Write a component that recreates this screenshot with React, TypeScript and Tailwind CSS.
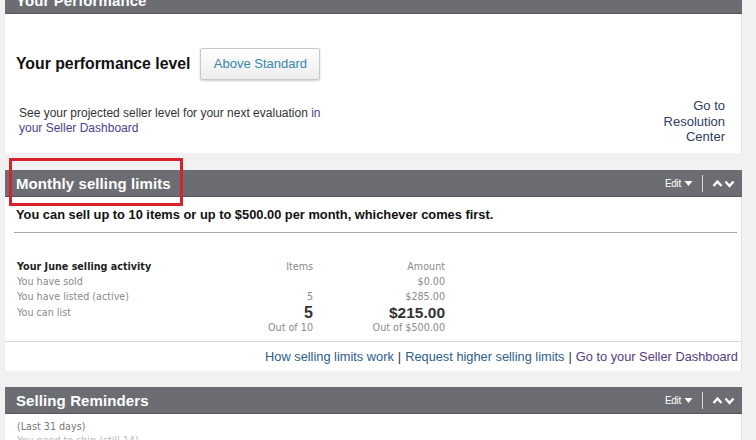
const EditControls = () => (
    <div className="flex items-center text-white">
        <span className="text-[10px] font-['Liberation_Sans',Arial,sans-serif] tracking-[-0.3px]">Edit</span>
        <svg className="ml-[3px]" width="9" height="7" viewBox="0 0 9 7">
            <path d="M0.5 1 L8.5 1 L4.5 6 Z" fill="#ffffff" />
        </svg>
        <span className="mx-[9px] h-[17px] w-px bg-[#d8d8d8]" />
        <svg width="24" height="9" viewBox="0 0 24 9">
            <path d="M1.5 7 L5.5 2.5 L9.5 7" stroke="#ffffff" strokeWidth="2.4" fill="none" />
            <path d="M13.5 2.5 L17.5 7 L21.5 2.5" stroke="#ffffff" strokeWidth="2.4" fill="none" />
        </svg>
    </div>
);

const Header = ({ title, controls, className = "" }: { title: string; controls?: boolean; className?: string }) => (
    <div className={`h-[27px] bg-[#6c6d72] flex items-center justify-between pl-[11px] pr-[6px] border-b border-[#55565a] ${className}`}>
        <h2 className="text-white font-bold text-[15px] leading-none tracking-[0.1px]">{title}</h2>
        {controls && <EditControls />}
    </div>
);

const rows = [
    { label: "You have sold", items: "", amount: "$0.00" },
    { label: "You have listed (active)", items: "5", amount: "$285.00" },
];

export default function App() {
    return (
        <div className="relative w-[756px] h-[440px] overflow-hidden bg-[#f1f1f1] font-['Liberation_Sans',Arial,sans-serif] text-[#222]">
            <div className="ml-[5px] w-[737px]">
                <Header title="Your Performance" className="-mt-[13px]" />

                <div className="h-[139px] bg-white border-r border-[#e2e2e2] px-[11px] pt-[34px]">
                    <div className="flex items-center">
                        <span className="text-[15.8px] font-bold text-[#111]">Your performance level</span>
                        <button className="ml-[10px] h-[32px] w-[120px] rounded-[2px] border border-[#c9c9c9] bg-gradient-to-b from-white to-[#ededed] shadow-[0_1px_2px_rgba(0,0,0,0.2)] text-[13px] text-[#3a87aa]">
                            Above Standard
                        </button>
                    </div>
                    <div className="mt-[18px] flex items-end justify-between pr-[5px]">
                        <p className="mb-[9px] ml-[3px] text-[12px] leading-[15px] text-[#333]">
                            See your projected seller level for your next evaluation{" "}
                            <span className="text-[#4b3f8c]">in</span>
                            <br />
                            <span className="text-[#4b3f8c]">your Seller Dashboard</span>
                        </p>
                        <p className="text-right text-[13px] leading-[15.5px] text-[#2e3c5c]">
                            Go to
                            <br />
                            Resolution
                            <br />
                            Center
                        </p>
                    </div>
                </div>

                <div className="h-[17px]" />

                <Header title="Monthly selling limits" controls />

                <div className="bg-white border-r border-[#e2e2e2]">
                    <div className="px-[11px] pt-[10px]">
                        <p className="text-[12.85px] font-bold leading-[16px] text-[#111]">
                            You can sell up to 10 items or up to $500.00 per month, whichever comes first.
                        </p>
                        <div className="mt-[9px] mr-[-7px] ml-[-2px] h-px bg-[#a8a8a8]" />
                    </div>

                    <div className="pl-[12px] pt-[26px] pb-[6px] font-['DejaVu_Sans',Verdana,sans-serif] text-[9.6px] text-[#8a8a8a]">
                        <div className="grid grid-cols-[216px_80px_132px] leading-[15px]">
                            <span className="font-bold text-[#222]">Your June selling activity</span>
                            <span className="text-right">Items</span>
                            <span className="text-right">Amount</span>
                            {rows.map((r) => (
                                <div key={r.label} className="contents">
                                    <span>{r.label}</span>
                                    <span className="text-right">{r.items}</span>
                                    <span className="text-right">{r.amount}</span>
                                </div>
                            ))}
                            <span className="leading-[17px]">You can list</span>
                            <span className="text-right font-['Liberation_Sans',Arial,sans-serif] font-bold text-[16px] leading-[17px] text-[#333]">5</span>
                            <span className="text-right font-['Liberation_Sans',Arial,sans-serif] font-bold text-[15.5px] leading-[17px] text-[#333]">$215.00</span>
                            <span />
                            <span className="text-right leading-[14px]">Out of 10</span>
                            <span className="text-right leading-[14px]">Out of $500.00</span>
                        </div>
                    </div>

                    <div className="h-[30px] border-t border-[#d6d6d6] flex items-center justify-end pr-[3px] text-[12.8px] text-[#333]">
                        <span className="text-[#2e5d8c]">How selling limits work</span>
                        <span className="mx-[4px]">|</span>
                        <span className="text-[#2e5d8c]">Request higher selling limits</span>
                        <span className="mx-[4px]">|</span>
                        <span className="text-[#5a3b7d]">Go to your Seller Dashboard</span>
                    </div>
                </div>

                <div className="h-[16px]" />

                <Header title="Selling Reminders" controls />

                <div className="h-[60px] bg-white border-r border-[#e2e2e2] pl-[12px] pt-[6px] font-['DejaVu_Sans',Verdana,sans-serif] text-[9.6px] leading-[14px] text-[#777]">
                    <p>(Last 31 days)</p>
                    <p className="text-[#bbb]">You need to ship     (still 14)</p>
                </div>
            </div>

            {/* annotation box */}
            <div className="absolute left-[9px] top-[158px] w-[174px] h-[48px] border-[3px] border-[#d6222d]" />
        </div>
    );
}
